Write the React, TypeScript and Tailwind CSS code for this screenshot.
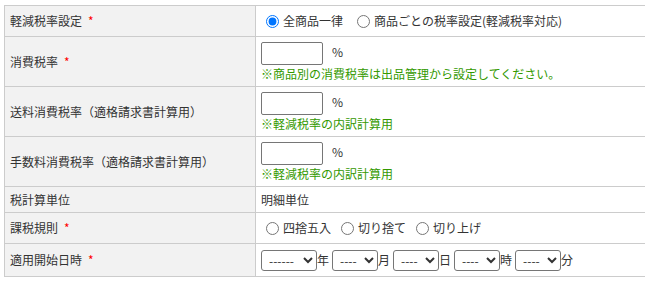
import type { ReactNode } from "react";

const font = { fontFamily: '"Noto Sans CJK JP", "Noto Sans", sans-serif' };

function Req() {
  return <span className="ml-[6px] text-[#ff0000]">*</span>;
}

function Row({
  label,
  required,
  h,
  children
}: {
  label: string;
  required?: boolean;
  h: string;
  children: ReactNode;
}) {
  return (
    <tr className={h}>
      <th className="w-[251px] border border-[#cccccc] bg-[#f2f2f2] px-[5px] text-left align-middle font-normal">
        {label}
        {required && <Req />}
      </th>
      <td className="border border-[#cccccc] bg-white px-[5px] align-middle">
        {children}
      </td>
    </tr>
  );
}

function Radio({ label, checked, name }: { label: string; checked?: boolean; name: string }) {
  return (
    <label className="mr-[5px] inline-flex items-center">
      <input
        type="radio"
        name={name}
        defaultChecked={checked}
        className="ml-[5px] mr-[3px] h-[13px] w-[13px]"
      />
      <span className="ml-px">{label}</span>
    </label>
  );
}

function PercentField({ note }: { note: string }) {
  return (
    <div className="flex flex-col">
      <div className="flex items-center">
        <input
          type="text"
          className="h-[23px] w-[62px] rounded-[2px] border border-[#767676] bg-white px-1"
        />
        <span className="ml-[9px] -mt-[3px]">%</span>
      </div>
      <div className="mt-px leading-[16px] text-[#339900]">{note}</div>
    </div>
  );
}

function DateSelect({ w, dash, unit }: { w: string; dash: string; unit: string }) {
  return (
    <span className="mr-[3px] inline-flex items-center">
      <select
        className={`${w} h-[21px] rounded-[3px] border border-[#767676] bg-white pl-[3px] text-[12px]`}
        defaultValue=""
      >
        <option value="">{dash}</option>
      </select>
      <span>{unit}</span>
    </span>
  );
}

export default function App() {
  return (
    <main className="h-[282px] w-[645px] overflow-hidden bg-white pl-[4px] pt-[5px] text-[12px] text-[#333333]" style={font}>
      <table className="w-[660px] border-collapse">
        <tbody>
          <Row label="軽減税率設定" required h="h-[31px]">
            <div className="flex items-center">
              <Radio name="rate" label="全商品一律" checked />
              <span className="w-[4px]" />
              <Radio name="rate" label="商品ごとの税率設定(軽減税率対応)" />
            </div>
          </Row>
          <Row label="消費税率" required h="h-[50px]">
            <PercentField note="※商品別の消費税率は出品管理から設定してください。" />
          </Row>
          <Row label="送料消費税率（適格請求書計算用）" h="h-[50px]">
            <PercentField note="※軽減税率の内訳計算用" />
          </Row>
          <Row label="手数料消費税率（適格請求書計算用）" h="h-[50px]">
            <PercentField note="※軽減税率の内訳計算用" />
          </Row>
          <Row label="税計算単位" h="h-[26px]">
            明細単位
          </Row>
          <Row label="課税規則" required h="h-[31px]">
            <div className="flex items-center">
              <Radio name="round" label="四捨五入" />
              <Radio name="round" label="切り捨て" />
              <Radio name="round" label="切り上げ" />
            </div>
          </Row>
          <Row label="適用開始日時" required h="h-[33px]">
            <div className="flex items-center">
              <DateSelect w="w-[56px]" dash="------" unit="年" />
              <DateSelect w="w-[46px]" dash="----" unit="月" />
              <DateSelect w="w-[46px]" dash="----" unit="日" />
              <DateSelect w="w-[46px]" dash="----" unit="時" />
              <DateSelect w="w-[46px]" dash="----" unit="分" />
            </div>
          </Row>
        </tbody>
      </table>
    </main>
  );
}
